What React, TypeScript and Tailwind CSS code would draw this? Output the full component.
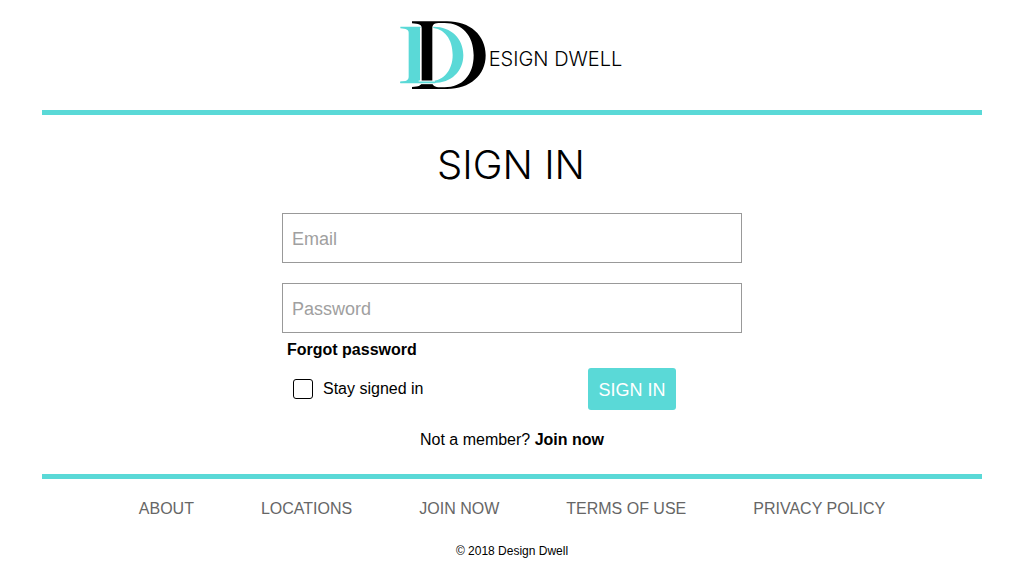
import React from "react";

function Logo() {
  return (
    <svg viewBox="24 24 261 210" className="h-[70px] w-[87px]" aria-hidden="true">
      <path
        fill="#5ad9d7"
        fillRule="evenodd"
        d="M25 44H125C178 44 214 80 214 129C214 178 178 213 125 213H25V209C42 208 50 205 50 194V62C50 53 42 50 25 49ZM84 47V208H116C156 206 182 174 182 129C182 82 158 48 116 47Z"
      />
      <path
        fill="#000"
        stroke="#fff"
        strokeWidth="5"
        paintOrder="stroke"
        fillRule="evenodd"
        d="M60 28H165C234 28 281 70 281 130C281 190 234 231 165 231H60V225C80 224 89 221 89 211V48C89 38 80 35 60 34ZM121 48V211C121 221 128 226 145 226H158C210 226 245 190 245 130C245 70 210 33 158 33H145C128 33 121 37 121 48Z"
      />
      <path fill="none" stroke="#fff" strokeWidth="11" d="M80 211H129" />
      <path fill="none" stroke="#5ad9d7" strokeWidth="5" d="M25 211H130" />
    </svg>
  );
}

const links = ["ABOUT", "LOCATIONS", "JOIN NOW", "TERMS OF USE", "PRIVACY POLICY"];

export default function App() {
  return (
    <div className="bg-white px-[42px] pt-5 font-['Liberation_Sans',Arial,sans-serif] text-base leading-5 text-black">
      <header className="flex h-[95px] items-start justify-center border-b-5 border-[#5ad9d7] pr-[2px]">
        <a href="#home" aria-label="Design Dwell" className="flex items-center gap-[2px]">
          <Logo />
          <span className="mt-2 font-['Inter',sans-serif] text-xl font-light">ESIGN DWELL</span>
        </a>
      </header>
      <main className="border-b-5 border-[#5ad9d7] pt-[26px] pb-6">
        <h1 className="pr-[2px] text-center font-['Inter',sans-serif] text-[40px] leading-12 font-light">SIGN IN</h1>
        <form className="mx-auto mt-6 max-w-[460px]" onSubmit={(e) => e.preventDefault()}>
          <input
            type="email"
            aria-label="Email"
            placeholder="Email"
            className="block h-[50px] w-full border border-[#999] px-[9px] pt-[2px] text-lg outline-none placeholder:text-[#a0a0a0]"
          />
          <input
            type="password"
            aria-label="Password"
            placeholder="Password"
            className="mt-5 block h-[50px] w-full border border-[#999] px-[9px] pt-[2px] text-lg outline-none placeholder:text-[#a0a0a0]"
          />
          <a href="#forgot" className="mt-[7px] ml-[5px] block w-fit font-bold">Forgot password</a>
          <div className="mt-2 flex items-center justify-between pr-[66px] pl-[11px]">
            <label className="flex items-center gap-[10px]">
              <input type="checkbox" className="size-5 appearance-none rounded-[3px] border border-black checked:bg-[#5ad9d7]" />
              Stay signed in
            </label>
            <button type="submit" className="h-[42px] min-w-[88px] rounded-[3px] bg-[#5ad9d7] pt-[2px] text-lg text-white">SIGN IN</button>
          </div>
        </form>
        <p className="mt-5 text-center">
          Not a member? <a href="#join" className="font-bold">Join now</a>
        </p>
      </main>
      <footer>
        <nav className="flex justify-center gap-[67px] pt-5 text-[#666]">
          {links.map((link) => (
            <a key={link} href="#footer">{link}</a>
          ))}
        </nav>
        <p className="mt-[22px] text-center text-xs leading-5">© 2018 Design Dwell</p>
      </footer>
    </div>
  );
}
